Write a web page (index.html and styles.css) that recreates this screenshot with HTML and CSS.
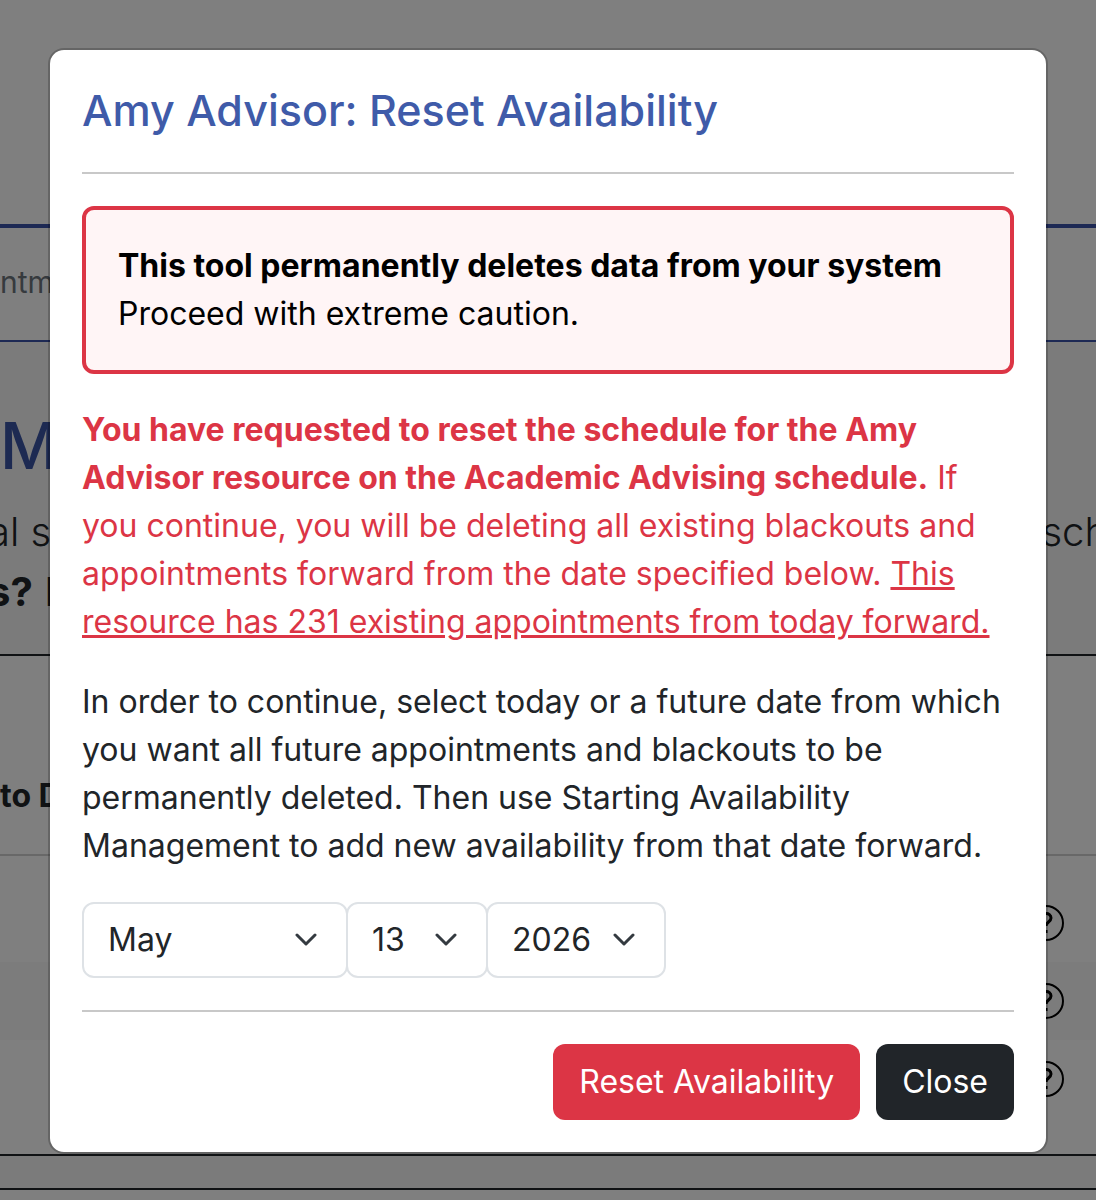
FILE: index.html
```
<!DOCTYPE html>
<html lang="en">
<head>
  <meta charset="UTF-8">
  <meta name="viewport" content="width=device-width, initial-scale=1">
  <title>Reset Availability</title>
  <link rel="stylesheet" href="styles.css">
</head>
<body>
  <div class="page" aria-hidden="true">
    <div class="banner"></div>
    <div class="nav">ntm</div>
    <div class="intro">
      <div class="intro-title">M</div>
      <div class="intro-row"><span>al s</span><span>sch</span></div>
      <div class="intro-row"><span><b>s?</b> N</span></div>
    </div>
    <div class="list-head">to D</div>
    <div class="list-row">
      <svg class="help" viewBox="0 0 36 36"><circle cx="18" cy="18" r="17"/><path d="M13 14c0-7 10-7 10-1 0 4-5 4-5 8M18 25v3"/></svg>
    </div>
    <div class="list-row striped">
      <svg class="help" viewBox="0 0 36 36"><circle cx="18" cy="18" r="17"/><path d="M13 14c0-7 10-7 10-1 0 4-5 4-5 8M18 25v3"/></svg>
    </div>
    <div class="list-row">
      <svg class="help" viewBox="0 0 36 36"><circle cx="18" cy="18" r="17"/><path d="M13 14c0-7 10-7 10-1 0 4-5 4-5 8M18 25v3"/></svg>
    </div>
    <div class="bottom-bar"></div>
  </div>

  <div class="backdrop">
    <form class="modal" role="dialog" aria-labelledby="title">
      <h1 id="title">Amy Advisor: Reset Availability</h1>
      <div class="modal-body">
        <div class="alert">
          <strong>This tool permanently deletes data from your system</strong><br>
          Proceed with extreme caution.
        </div>
        <p class="danger"><strong>You have requested to reset the schedule for the Amy Advisor resource on the Academic Advising schedule.</strong> If you continue, you will be deleting all existing blackouts and appointments forward from the date specified below. <u>This resource has 231 existing appointments from today forward.</u></p>
        <p>In order to continue, select today or a future date from which you want all future appointments and blackouts to be permanently deleted. Then use Starting Availability Management to add new availability from that date forward.</p>
        <div class="date">
          <select class="month" aria-label="Month"><option>May</option></select>
          <select class="day" aria-label="Day"><option>13</option></select>
          <select class="year" aria-label="Year"><option>2026</option></select>
        </div>
      </div>
      <div class="modal-footer">
        <button type="button" class="btn btn-danger">Reset Availability</button>
        <button type="button" class="btn btn-dark">Close</button>
      </div>
    </form>
  </div>
</body>
</html>
```

FILE: styles.css
```
* {
  box-sizing: border-box;
}
body {
  margin: 0;
  font-family: Inter, "Liberation Sans", sans-serif;
  font-size: 32px;
  line-height: 48px;
  color: #212529;
  background: #fff;
}

/* page behind the dialog */
.page {
  position: absolute;
  top: 0;
  left: 0;
  right: 0;
  height: 100%;
  overflow: hidden;
  white-space: nowrap;
}
.banner {
  height: 228px;
  border-bottom: 4px solid #3b52a8;
}
.nav {
  height: 114px;
  padding-top: 30px;
  font-size: 30px;
  color: #6c757d;
  border-bottom: 2px solid #3b52a8;
}
.intro {
  height: 314px;
  padding-top: 68px;
  background: #f6f6f6;
  border-bottom: 2px solid #212529;
}
.intro-title {
  font-size: 64px;
  line-height: 72px;
  font-weight: 500;
  color: #3b55a5;
}
.intro-row {
  display: flex;
  justify-content: space-between;
  margin: 0 -12px;
  padding-top: 12px;
  font-size: 40px;
  font-weight: 300;
}
.intro-row:nth-child(2) {
  padding-top: 26px;
}
.intro-row b {
  font-weight: 700;
}
.list-head {
  height: 200px;
  padding-top: 116px;
  margin-bottom: 28px;
  font-weight: 700;
  border-bottom: 2px solid #d0d0d0;
}
.list-row {
  display: flex;
  align-items: center;
  justify-content: flex-end;
  height: 78px;
  padding-right: 32px;
}
.list-row.striped {
  background: #f8f8f8;
}
.help {
  width: 36px;
  height: 36px;
  fill: none;
  stroke: #000;
  stroke-width: 2;
}
.help path {
  stroke-width: 3;
}
.bottom-bar {
  height: 36px;
  margin-top: 36px;
  background: #f6f6f6;
  border: solid #212529;
  border-width: 2px 0;
}

.backdrop {
  position: relative;
  min-height: 100vh;
  padding: 48px;
  background: rgba(0, 0, 0, .5);
}
.modal {
  padding: 32px;
  background: #fff;
  background-clip: padding-box;
  border: 2px solid rgba(0, 0, 0, .2);
  border-radius: 16px;
}
h1 {
  margin: 0;
  padding-bottom: 34px;
  font-size: 43px;
  line-height: 56px;
  font-weight: 500;
  color: #3f5ba9;
  border-bottom: 2px solid #c8c8c8;
}
.modal-body {
  padding: 32px 0;
}
.alert {
  padding: 32px;
  color: #000;
  background: #fff5f6;
  border: 4px solid #dc3545;
  border-radius: 12px;
}
p {
  margin: 32px 0;
}
.danger {
  color: #dc3545;
}
.date {
  display: flex;
}
select {
  appearance: none;
  height: 76px;
  padding: 0 24px;
  font: inherit;
  color: #212529;
  background: #fff url("data:image/svg+xml,%3Csvg xmlns='http://www.w3.org/2000/svg' viewBox='0 0 24 14'%3E%3Cpath d='M3 2l9 9 9-9' fill='none' stroke='%23343a40' stroke-width='3' stroke-linecap='round' stroke-linejoin='round'/%3E%3C/svg%3E") no-repeat right 28px center / 24px 14px;
  border: 2px solid #dee2e6;
  border-radius: 12px;
}
select + select {
  margin-left: -2px;
}
.month {
  width: 266px;
}
.day {
  width: 142px;
}
.year {
  width: 180px;
}
.modal-footer {
  display: flex;
  justify-content: flex-end;
  gap: 16px;
  padding-top: 32px;
  border-top: 2px solid #c8c8c8;
}
.btn {
  height: 76px;
  padding: 0 26px;
  font: inherit;
  color: #fff;
  border: none;
  border-radius: 12px;
  cursor: pointer;
}
.btn-danger {
  background: #dc3545;
}
.btn-dark {
  background: #212529;
}
```
